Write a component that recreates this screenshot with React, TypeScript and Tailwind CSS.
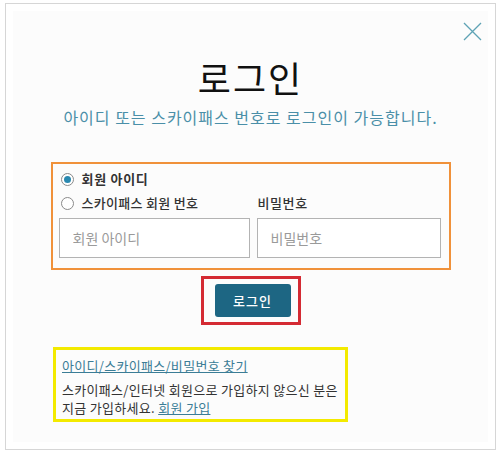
import React from "react";

const font = { fontFamily: '"Noto Sans CJK KR", "Noto Sans", sans-serif' };

/* ---------------- PAGE ---------------- */

export default function App() {
  return (
    <div className="w-[500px] h-[453px] bg-white pt-[3px] pl-[5px]" style={font}>
      <div className="relative w-[491px] h-[447px] border border-[#d6d6d6] bg-white p-[7px]">
        <div className="h-full bg-[#fcfcfc] flex flex-col items-center">
          {/* Close */}
          <button className="absolute right-[13px] top-[18px] w-[19px] h-[19px]">
            <svg viewBox="0 0 19 19" className="w-[19px] h-[19px]" fill="none" stroke="#5ea3b5" strokeWidth="1.3">
              <path d="M1 1L18 18M18 1L1 18" />
            </svg>
          </button>

          {/* Header */}
          <h1 className="mt-[48px] text-[36px] leading-none font-normal text-[#111] tracking-[2px]">로그인</h1>
          <p className="mt-[12px] text-[16px] leading-[20px] text-[#4a8fa8] tracking-[1px]">
            아이디 또는 스카이패스 번호로 로그인이 가능합니다.
          </p>

          {/* Form */}
          <div className="mt-[35px] w-[400px] border-2 border-[#f0913a] pl-[6px] pr-[8px] pt-[7px] pb-[10px]">
            <Radio checked label="회원 아이디" bold />
            <div className="mt-[8px] grid grid-cols-[191px_184px] gap-x-[7px]">
              <Radio label="스카이패스 회원 번호" />
              <span className="h-[16px] pl-[1px] flex items-center text-[13px] text-[#333] font-medium tracking-[0.6px]">
                비밀번호
              </span>
            </div>
            <div className="mt-[7px] grid grid-cols-[191px_184px] gap-x-[7px]">
              <input
                placeholder="회원 아이디"
                className="h-[40px] border border-[#b3b3b3] bg-white px-[13px] text-[14px] placeholder:text-[#9a9a9a] outline-none"
              />
              <input
                placeholder="비밀번호"
                className="h-[40px] border border-[#b3b3b3] bg-white px-[13px] text-[14px] placeholder:text-[#9a9a9a] outline-none"
              />
            </div>
          </div>

          {/* Submit */}
          <div className="mt-[6px] border-[3px] border-[#d42a33] pl-[11px] pr-[7px] py-[5px]">
            <button className="w-[76px] h-[33px] rounded-[3px] bg-[#1d6683] text-white text-[13px] font-medium tracking-[1px]">
              로그인
            </button>
          </div>

          {/* Help */}
          <div className="self-start ml-[40px] mt-[22px] w-[295px] h-[75px] border-[3px] border-[#f3ea00] px-[6px] pt-[6px] text-[13px] tracking-[0.3px]">
            <a href="#" className="text-[#3b7d96] underline leading-[18px]">
              아이디/스카이패스/비밀번호 찾기
            </a>
            <p className="mt-[5px] leading-[18px] text-[#333]">
              스카이패스/인터넷 회원으로 가입하지 않으신 분은
              <br />
              지금 가입하세요.{" "}
              <a href="#" className="text-[#3b7d96] underline">
                회원 가입
              </a>
            </p>
          </div>
        </div>
      </div>
    </div>
  );
}

/* ---------------- COMPONENTS ---------------- */

function Radio({ label, checked, bold }: { label: string; checked?: boolean; bold?: boolean }) {
  return (
    <label className="h-[16px] flex items-center gap-[8px] ml-[2px]">
      <span className="w-[13px] h-[13px] rounded-full border border-[#8a8a8a] bg-white flex items-center justify-center">
        {checked && <span className="w-[7px] h-[7px] rounded-full bg-[#2a89b0]" />}
      </span>
      <span className={`text-[13px] text-[#333] ${bold ? "font-bold tracking-[0.7px]" : "font-medium tracking-[0.3px]"}`}>
        {label}
      </span>
    </label>
  );
}
